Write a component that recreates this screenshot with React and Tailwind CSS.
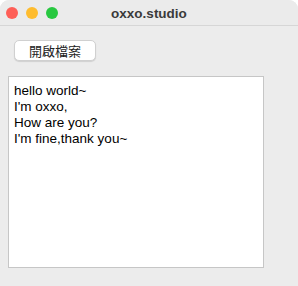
import React from 'react';

const lines = ['hello world~', "I'm oxxo,", 'How are you?', "I'm fine,thank you~"];

export default function App() {
  return (
    <div className="w-[298px] h-[286px] bg-white">
      <div className="flex h-full flex-col overflow-hidden rounded-t-[9px] bg-[#ececec] font-['Liberation_Sans',Arial,'Noto_Sans_CJK_TC',sans-serif]">
        <div className="relative flex h-[26px] items-center border-b border-[#d6d6d6] bg-[#ebebeb] pl-[6px]">
          <div className="flex gap-[8px]">
            <span className="h-[12px] w-[12px] rounded-full bg-[#fe5f57]" />
            <span className="h-[12px] w-[12px] rounded-full bg-[#febc2e]" />
            <span className="h-[12px] w-[12px] rounded-full bg-[#28c840]" />
          </div>
          <div className="absolute inset-x-0 top-[4px] text-center text-[13.5px] font-bold text-[#3a3a3a]">oxxo.studio</div>
        </div>
        <div className="pl-[14px] pt-[14px]">
          <button className="flex h-[21px] w-[82px] items-center justify-center rounded-[5px] border border-[#d0d0d0] bg-white text-[13px] text-[#222] shadow-[0_1px_1px_rgba(0,0,0,0.12)] font-['Noto_Sans_CJK_TC',sans-serif]">
            開啟檔案
          </button>
        </div>
        <div className="ml-[8px] mt-[15px] h-[192px] w-[256px] border border-[#c6c6c6] bg-white px-[5px] pt-[6px] text-[13.5px] leading-[16px] text-black">
          {lines.map((l) => (
            <div key={l}>{l}</div>
          ))}
        </div>
      </div>
    </div>
  );
}
